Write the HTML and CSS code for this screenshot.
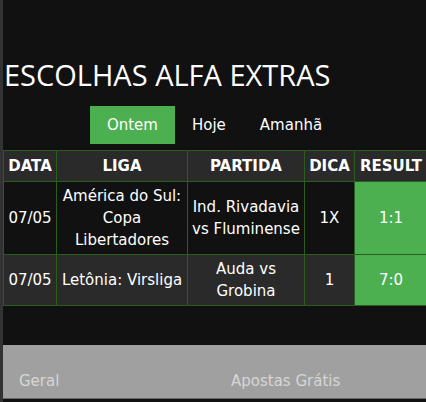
FILE: index.html
```html
<!DOCTYPE html>
<html lang="pt-BR">
<head>
  <meta charset="UTF-8" />
  <title>Escolhas Alfa Extras</title>
  <link rel="stylesheet" href="styles.css">
</head>
<body>

<h1>ESCOLHAS ALFA EXTRAS</h1>

<div id="tabs">
  <div class="tab active">Ontem</div>
  <div class="tab">Hoje</div>
  <div class="tab">Amanhã</div>
</div>

<table id="picks">
  <colgroup>
    <col class="c-data">
    <col class="c-liga">
    <col class="c-partida">
    <col class="c-dica">
    <col class="c-result">
  </colgroup>
  <tr>
    <th>DATA</th>
    <th>LIGA</th>
    <th>PARTIDA</th>
    <th>DICA</th>
    <th>RESULT</th>
  </tr>
  <tr>
    <td>07/05</td>
    <td>América do Sul: Copa Libertadores</td>
    <td>Ind. Rivadavia vs Fluminense</td>
    <td>1X</td>
    <td class="win">1:1</td>
  </tr>
  <tr class="alt">
    <td>07/05</td>
    <td>Letônia: Virsliga</td>
    <td>Auda vs Grobina</td>
    <td>1</td>
    <td class="win">7:0</td>
  </tr>
</table>

<div id="footer">
  <div class="foot-col">Geral</div>
  <div class="foot-col">Apostas Grátis</div>
</div>

</body>
</html>
```

FILE: styles.css
```css
html {
  background: #111;
}
body {
  margin: 0;
  padding: 0;
  background: #111;
  border-left: 3px solid #333;
  min-height: 402px;
  color: #fff;
  font-family: Tahoma, "DejaVu Sans", sans-serif;
  font-size: 15px;
  overflow: hidden;
}
h1 {
  margin: 0;
  padding: 53px 0 0 1px;
  font-family: "Open Sans", "Noto Sans", sans-serif;
  font-weight: 400;
  font-size: 29px;
  line-height: 44px;
  height: 53px;
}
#tabs {
  display: flex;
  justify-content: center;
}
.tab {
  padding: 0 17px;
  height: 38px;
  line-height: 38px;
}
.tab.active {
  background: #4caf50;
}
#picks {
  margin-top: 6px;
  border-collapse: collapse;
  table-layout: fixed;
  width: 424px;
}
.c-data { width: 53px; }
.c-liga { width: 131px; }
.c-partida { width: 117px; }
.c-dica { width: 50px; }
.c-result { width: 73px; }
#picks th,
#picks td {
  border: 1px solid #2b5d1d;
  text-align: center;
  padding: 3px 1px;
  line-height: 22px;
}
#picks th {
  background: #2a2a2a;
  font-weight: bold;
  padding: 4px 0;
}
#picks tr.alt td {
  background: #2a2a2a;
}
#picks td.win,
#picks tr.alt td.win {
  background: #4caf50;
}
#footer {
  margin-top: 39px;
  height: 53px;
  background: #a0a0a0;
  border-bottom: 1px solid #666;
  display: grid;
  grid-template-columns: 212px 1fr;
  align-items: end;
}
.foot-col {
  padding: 0 16px 6px;
  color: #d6d6d6;
  line-height: 22px;
}
```
